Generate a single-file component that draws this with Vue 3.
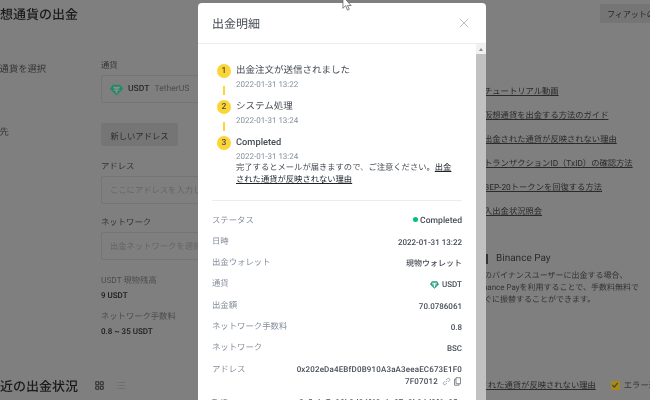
<script setup>
const steps = [
  { n: 1, title: '出金注文が送信されました', time: '2022-01-31 13:22' },
  { n: 2, title: 'システム処理', time: '2022-01-31 13:24' },
  { n: 3, title: 'Completed', time: '2022-01-31 13:24' }
]

const guides = [
  'チュートリアル動画',
  '仮想通貨を出金する方法のガイド',
  '出金された通貨が反映されない理由',
  'トランザクションID（TxID）の確認方法',
  'BEP-20トークンを回復する方法',
  '入出金状況照会'
]

const rows = [
  { label: '日時', value: '2022-01-31 13:22' },
  { label: '出金ウォレット', value: '現物ウォレット' }
]

const rows2 = [
  { label: '出金額', value: '70.0786061' },
  { label: 'ネットワーク手数料', value: '0.8' },
  { label: 'ネットワーク', value: 'BSC' }
]
</script>

<template>
  <div class="screen">
    <div class="page">
      <header class="page-head">
        <h1>仮想通貨の出金</h1>
        <button class="fiat-btn">フィアットの出金</button>
      </header>

      <div class="page-main">
        <div class="side-labels">
          <div class="side-one">仮想通貨を選択</div>
          <div class="side-two">送金先</div>
        </div>

        <div class="form">
          <div class="field-label">通貨</div>
          <div class="box coin-box">
            <svg class="tether" viewBox="0 0 24 24" width="13" height="13">
              <path fill="#1f8a68" d="M5 3h14l5 8-12 12L0 11z" />
              <path fill="#8f8f8f" d="M6 7h12v3h-4.500v2.200c2.500.100 4.500.500 4.500 1 0 .500-2 .900-4.500 1V19h-3v-4.800c-2.500-.100-4.500-.500-4.500-1 0-.500 2-.900 4.500-1V10H6z" />
            </svg>
            <b>USDT</b><span class="coin-name">TetherUS</span>
          </div>
          <button class="new-addr">新しいアドレス</button>
          <div class="field-label addr-label">アドレス</div>
          <div class="box hint">ここにアドレスを入力してください</div>
          <div class="field-label net-label">ネットワーク</div>
          <div class="box hint">出金ネットワークを選択</div>
          <div class="stat-label first">USDT 現物残高</div>
          <div class="stat-value">9 USDT</div>
          <div class="stat-label">ネットワーク手数料</div>
          <div class="stat-value">0.8 ~ 35 USDT</div>
        </div>

        <aside class="guide">
          <a v-for="g in guides" :key="g">{{ g }}</a>
          <div class="pay-title"><i></i>Binance Pay</div>
          <p class="pay-text">他のバイナンスユーザーに出金する場合、<br />Binance Payを利用することで、手数料無料で<br />すぐに振替することができます。</p>
        </aside>
      </div>

      <footer class="page-foot">
        <h2>最近の出金状況</h2>
        <div class="view-toggle">
          <svg viewBox="0 0 12 12" width="9" height="9">
            <path fill="none" stroke="#2b2b2b" stroke-width="1.300" d="M1 1h4v4H1zM7 1h4v4H7zM1 7h4v4H1zM7 7h4v4H7z" />
          </svg>
          <svg viewBox="0 0 12 12" width="9" height="9">
            <path fill="none" stroke="#6a6a6a" stroke-width="1" d="M3 2h9M3 6h9M3 10h9M0 2h1M0 6h1M0 10h1" />
          </svg>
        </div>
        <a class="foot-link">出金された通貨が反映されない理由</a>
        <span class="check">
          <svg viewBox="0 0 12 12" width="8" height="8"><path fill="none" stroke="#4a4a2a" stroke-width="1.800" d="M2 6l3 3 5-6" /></svg>
        </span>
        <span class="foot-error">エラー通知</span>
      </footer>
    </div>

    <div class="modal">
      <div class="modal-head">
        <span>出金明細</span>
        <svg viewBox="0 0 12 12" width="10" height="10">
          <path stroke="#b3b9c2" stroke-width="1.100" d="M1 1l10 10M11 1L1 11" />
        </svg>
      </div>
      <div class="modal-body">
        <div class="modal-content">
          <div class="steps">
            <div v-for="s in steps" :key="s.n" class="step">
              <div class="step-marker">
                <span class="circle">{{ s.n }}</span>
                <span v-if="s.n < 3" class="dash"></span>
              </div>
              <div class="step-text">
                <div class="step-title">{{ s.title }}</div>
                <div class="step-time">{{ s.time }}</div>
                <div v-if="s.n === 3" class="step-note">
                  完了するとメールが届きますので、ご注意ください。<a>出金された通貨が反映されない理由</a>
                </div>
              </div>
            </div>
          </div>

          <div class="details">
            <div class="row">
              <span class="label">ステータス</span>
              <span class="value status"><i class="dot"></i>Completed</span>
            </div>
            <div v-for="r in rows" :key="r.label" class="row">
              <span class="label">{{ r.label }}</span>
              <span class="value">{{ r.value }}</span>
            </div>
            <div class="row">
              <span class="label">通貨</span>
              <span class="value">
                <svg class="tether-sm" viewBox="0 0 24 24" width="9" height="9">
                  <path fill="#26a17b" d="M5 3h14l5 8-12 12L0 11z" />
                  <path fill="#fff" d="M6 7h12v3h-4.500v2.200c2.500.100 4.500.500 4.500 1 0 .500-2 .900-4.500 1V19h-3v-4.800c-2.500-.100-4.500-.500-4.500-1 0-.500 2-.900 4.500-1V10H6z" />
                </svg>
                USDT
              </span>
            </div>
            <div v-for="r in rows2" :key="r.label" class="row">
              <span class="label">{{ r.label }}</span>
              <span class="value">{{ r.value }}</span>
            </div>
            <div class="row addr-row">
              <span class="label">アドレス</span>
              <span class="value addr">
                0x202eDa4EBfD0B910A3aA3eeaEC673E1F07F07012
                <svg viewBox="0 0 12 12" width="9" height="9">
                  <path fill="none" stroke="#848e9c" stroke-width="1" d="M5 7l2-2M4 5.500L2 7.500a1.800 1.800 0 0 0 2.500 2.500l2-2M8 6.500l2-2A1.800 1.800 0 0 0 7.500 2l-2 2" />
                </svg>
                <svg viewBox="0 0 12 12" width="9" height="9">
                  <path fill="none" stroke="#5e6673" stroke-width="1" d="M4 1h6v8H4zM4 3H2v8h6V9" />
                </svg>
              </span>
            </div>
            <div class="row">
              <span class="label">TxID</span>
              <span class="value addr">0x5e1c7a90b3d24f68a1c07e3b94d2f6a85c10e7d3</span>
            </div>
          </div>
        </div>
        <div class="scrollbar">
          <span class="arrow"></span>
          <span class="thumb"></span>
        </div>
      </div>
    </div>

    <svg class="cursor" viewBox="0 0 12 14" width="11" height="13">
      <path fill="#fff" stroke="#555" stroke-width="0.800" d="M1-4v13l3-3 2 5 2-1-2-4h4z" />
    </svg>
  </div>
</template>

<style scoped>
.screen {
  position: relative;
  width: 650px;
  height: 400px;
  overflow: hidden;
  background: #7f7f7f;
  font-family: "Roboto", "Noto Sans CJK JP", sans-serif;
  text-rendering: geometricPrecision;
  color: #141414;
  filter: blur(0.3px);
}

.page {
  width: 700px;
  margin-left: -13px;
  color: #2a2b2d;
}

.page-head {
  display: flex;
  align-items: center;
  justify-content: space-between;
  height: 26px;
}

h1,
h2 {
  margin: 0;
  font-size: 13px;
  font-weight: 500;
  color: #1a1a1a;
  white-space: nowrap;
}

.fiat-btn {
  margin-left: auto;
  width: 87px;
  height: 19px;
  border: none;
  border-radius: 2px;
  background: #757575;
  font: inherit;
  font-size: 8px;
  color: #262626;
  text-align: left;
  padding: 0 0 0 7px;
  white-space: nowrap;
  overflow: hidden;
}

.page-main {
  display: flex;
  margin-top: 34px;
  height: 313px;
}

.side-labels {
  flex: none;
  width: 120px;
  margin-left: -6px;
  font-size: 9.300px;
  color: #333;
}

.side-one {
  margin-top: 1px;
}

.side-two {
  margin-top: 49px;
}

.form {
  flex: none;
  width: 383px;
  font-size: 8.300px;
}

.field-label {
  font-size: 8.400px;
  color: #333;
  line-height: 13px;
}

.box {
  box-sizing: border-box;
  height: 28px;
  margin-top: 2px;
  border: 1px solid #757575;
  border-radius: 2px;
  display: flex;
  align-items: center;
  padding: 0 8px;
}

.coin-box b {
  margin-left: 5px;
  font-size: 8.600px;
  font-weight: 500;
}

.coin-name {
  margin-left: 5px;
  font-size: 8.600px;
  color: #4d4d4d;
}

.hint {
  color: #656565;
  font-size: 8.300px;
  white-space: nowrap;
}

.new-addr {
  display: block;
  margin-top: 20px;
  width: 77px;
  height: 23px;
  border: none;
  border-radius: 2px;
  background: #757575;
  color: #2a2a2a;
  font: inherit;
  font-size: 8.300px;
  padding: 0;
}

.addr-label {
  margin-top: 14.500px;
}

.net-label {
  margin-top: 13.500px;
}

.stat-label {
  margin-top: 9px;
  font-size: 8.300px;
  line-height: 13px;
  color: #4d4d4d;
}

.stat-label.first {
  margin-top: 14.500px;
}

.stat-value {
  margin-top: 1px;
  font-size: 8px;
  font-weight: 500;
  line-height: 13px;
  color: #1a1a1a;
}

.guide {
  display: flex;
  flex-direction: column;
  align-items: flex-start;
  padding-top: 24px;
  font-size: 8.300px;
}

.guide a {
  height: 24px;
  line-height: 16px;
  text-decoration: underline;
  white-space: nowrap;
  color: #2a2b2d;
}

.pay-title {
  margin-top: 25px;
  font-size: 10px;
  line-height: 12px;
  display: flex;
  align-items: center;
  gap: 8px;
}

.pay-title i {
  width: 2px;
  height: 10px;
  margin-left: 2px;
  background: #333;
}

.pay-text {
  margin: 5px 0 0 -8px;
  line-height: 12px;
  font-size: 8px;
  white-space: nowrap;
  color: #333;
}

.page-foot {
  display: flex;
  align-items: center;
  height: 24px;
}

.view-toggle {
  flex: none;
  display: flex;
  gap: 12px;
  margin-left: 17px;
  width: 30px;
  align-items: center;
}

.foot-link {
  margin-left: 338px;
  font-size: 8.300px;
  text-decoration: underline;
  white-space: nowrap;
  color: #2a2b2d;
}

.check {
  flex: none;
  margin-left: 15px;
  width: 9px;
  height: 9px;
  border-radius: 1px;
  background: #a88a1a;
  display: flex;
  align-items: center;
  justify-content: center;
}

.foot-error {
  margin-left: 4px;
  font-size: 8.300px;
  color: #333;
  white-space: nowrap;
}

.modal {
  position: absolute;
  left: 198px;
  top: 3px;
  width: 288px;
  height: 440px;
  display: flex;
  flex-direction: column;
  background: #fff;
  border-radius: 4px;
  overflow: hidden;
}

.modal-head {
  flex: none;
  box-sizing: border-box;
  height: 41px;
  padding: 0 17px 0 14px;
  display: flex;
  align-items: center;
  justify-content: space-between;
  border-bottom: 1px solid #eaecef;
  font-size: 12px;
  color: #474d57;
}

.modal-body {
  flex: 1;
  display: flex;
  min-height: 0;
}

.modal-content {
  flex: 1;
  min-width: 0;
  padding: 20px 14px 0;
}

.step {
  display: flex;
  gap: 4px;
  height: 36px;
}

.step:last-child {
  height: auto;
}

.step-marker {
  display: flex;
  flex-direction: column;
  align-items: center;
  width: 16px;
  margin-left: 4px;
}

.circle {
  flex: none;
  width: 14px;
  height: 14px;
  border-radius: 50%;
  background: #fcd535;
  font-size: 8.500px;
  font-weight: 500;
  line-height: 14px;
  text-align: center;
  color: #474d57;
}

.dash {
  width: 2.500px;
  height: 9px;
  margin-top: 8px;
  background: #fcd535;
}

.step-text {
  flex: 1;
  min-width: 0;
}

.step-title {
  font-size: 9.500px;
  line-height: 14px;
  color: #474d57;
}

.step:last-child .step-title {
  font-weight: 500;
  font-size: 9.300px;
}

.step-time {
  margin-top: 1px;
  font-size: 8px;
  line-height: 11px;
  color: #848e9c;
}

.step-note {
  padding-right: 6px;
  font-size: 8.300px;
  line-height: 12px;
  color: #474d57;
}

.step-note a {
  text-decoration: underline;
  color: #1e2329;
}

.details {
  margin-top: 14px;
  padding-top: 9.500px;
  border-top: 1px solid #eaecef;
}

.row {
  display: flex;
  justify-content: space-between;
  height: 21.330px;
  line-height: 21.330px;
  font-size: 8.400px;
}

.label {
  flex: none;
  color: #848e9c;
}

.value {
  color: #474d57;
  font-weight: 500;
  font-size: 8px;
  white-space: nowrap;
}

.status {
  font-size: 8.600px;
}

.dot {
  display: inline-block;
  width: 5px;
  height: 5px;
  margin-right: 2px;
  border-radius: 50%;
  background: #02c076;
  vertical-align: 1px;
}

.tether-sm {
  vertical-align: -1.500px;
  margin-right: 1px;
}

.addr-row {
  height: auto;
  min-height: 33px;
}

.addr {
  width: 167px;
  text-align: right;
  white-space: normal;
  word-break: break-all;
  letter-spacing: 0.160px;
  line-height: 12.500px;
  padding-top: 4px;
}

.addr svg {
  vertical-align: -1.500px;
  margin-left: 2px;
}

.scrollbar {
  flex: none;
  width: 10px;
  background: #f1f1f1;
  display: flex;
  flex-direction: column;
  align-items: center;
}

.arrow {
  flex: none;
  margin-top: 4px;
  margin-bottom: 3px;
  border-left: 2.500px solid transparent;
  border-right: 2.500px solid transparent;
  border-bottom: 3px solid #8a8a8a;
}

.thumb {
  width: 100%;
  flex: 1;
  background: #c1c1c1;
}

.cursor {
  position: absolute;
  left: 342px;
  top: 0;
}
</style>

<style>
html,
body {
  margin: 0;
  overflow: hidden;
}
</style>
